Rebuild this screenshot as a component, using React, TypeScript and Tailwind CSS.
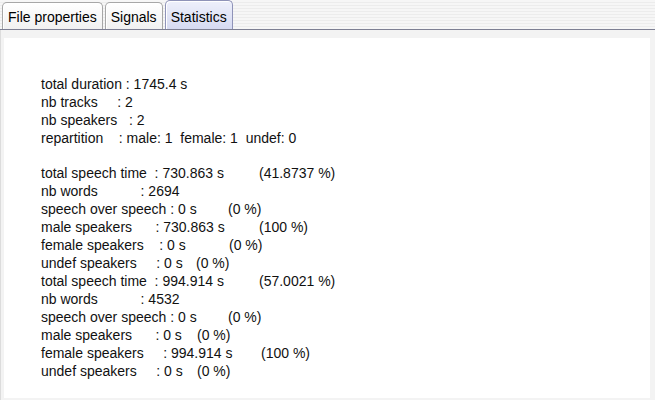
import React from "react";

function Tab({ label, selected }: { label: string; selected?: boolean }) {
  return (
    <div
      className={
        selected
          ? "h-[29px] rounded-t-[5px] border border-b-0 border-[#8f93b8] bg-[linear-gradient(to_bottom,#eef0fb,#d6daf1)] px-[5px] pt-[7px] text-[14px] leading-[18px] text-black shadow-[inset_1px_1px_0_#ffffff]"
          : "h-[27px] rounded-t-[5px] border border-b-0 border-[#a7a7a7] bg-[linear-gradient(to_bottom,#ffffff,#f1f1f1)] px-[5px] pt-[5px] text-[14px] leading-[18px] text-black shadow-[inset_1px_1px_0_#ffffff]"
      }
    >
      {label}
    </div>
  );
}

function Row({ children }: { children: React.ReactNode }) {
  return <div className="flex h-[18px] whitespace-pre">{children}</div>;
}

export default function App() {
  return (
    <div className="w-[655px] h-[400px] bg-[#f3f3f3] flex flex-col font-['Liberation_Sans',Arial,sans-serif] overflow-hidden">
      <div className="h-[30px] shrink-0 flex items-end pl-[2px] gap-[2px] border-b border-[#7d7f93] bg-[repeating-linear-gradient(to_bottom,#f6f6f6_0px,#f6f6f6_2px,#ececec_2px,#ececec_3px)]">
        <Tab label="File properties" />
        <Tab label="Signals" />
        <Tab label="Statistics" selected />
      </div>
      <div className="flex-1 pt-[8px] pl-[3px] pr-[5px] pb-[2px] border-l border-[#dcdcdc]">
        <div className="h-full bg-white pl-[37px] pt-[37px] text-[14px] leading-[18px] text-[#111111]">
          <Row>
            <span>total duration : 1745.4 s</span>
          </Row>
          <Row>
            <span>nb tracks     : 2</span>
          </Row>
          <Row>
            <span>nb speakers   : 2</span>
          </Row>
          <Row>
            <span>repartition    : male: 1  female: 1  undef: 0</span>
          </Row>
          <div className="h-[17px]" />
          <Row>
            <span className="inline-block w-[218px]">total speech time  : 730.863 s</span>
            <span>(41.8737 %)</span>
          </Row>
          <Row>
            <span>nb words           : 2694</span>
          </Row>
          <Row>
            <span className="inline-block w-[187px]">speech over speech : 0 s</span>
            <span>(0 %)</span>
          </Row>
          <Row>
            <span className="inline-block w-[218px]">male speakers      : 730.863 s</span>
            <span>(100 %)</span>
          </Row>
          <Row>
            <span className="inline-block w-[188px]">female speakers    : 0 s</span>
            <span>(0 %)</span>
          </Row>
          <Row>
            <span className="inline-block w-[155px]">undef speakers     : 0 s</span>
            <span>(0 %)</span>
          </Row>
          <Row>
            <span className="inline-block w-[218px]">total speech time  : 994.914 s</span>
            <span>(57.0021 %)</span>
          </Row>
          <Row>
            <span>nb words           : 4532</span>
          </Row>
          <Row>
            <span className="inline-block w-[187px]">speech over speech : 0 s</span>
            <span>(0 %)</span>
          </Row>
          <Row>
            <span className="inline-block w-[156px]">male speakers      : 0 s</span>
            <span>(0 %)</span>
          </Row>
          <Row>
            <span className="inline-block w-[220px]">female speakers     : 994.914 s</span>
            <span>(100 %)</span>
          </Row>
          <Row>
            <span className="inline-block w-[156px]">undef speakers     : 0 s</span>
            <span>(0 %)</span>
          </Row>
        </div>
      </div>
    </div>
  );
}
